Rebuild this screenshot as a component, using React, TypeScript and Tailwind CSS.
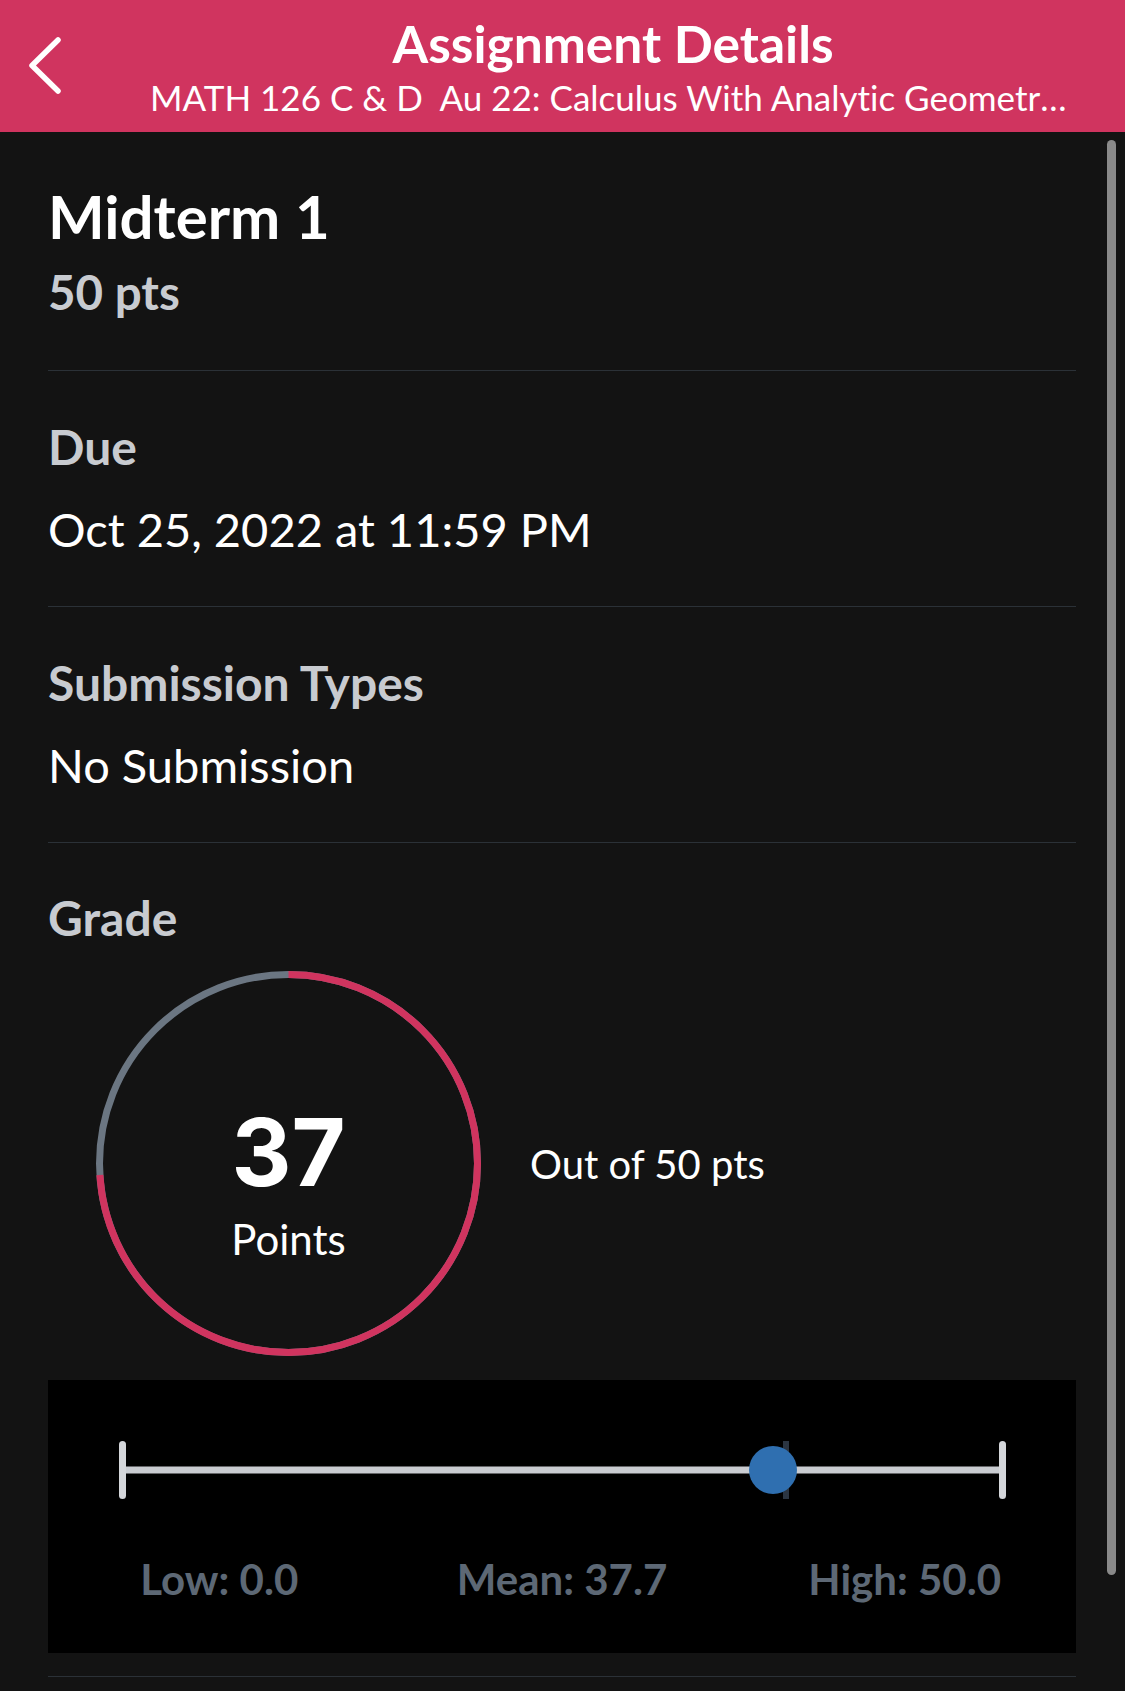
const Section = ({ label, value }: { label: string; value: string }) => (
  <div className="pt-[48px] pb-[49px] border-b border-[#2b3137]">
    <div className="text-[48px] leading-[56px] font-bold text-[#c8cbd0]">{label}</div>
    <div className="mt-[26px] text-[47px] leading-[56px] text-white">{value}</div>
  </div>
)

const ScoreRing = ({ score, total }: { score: number; total: number }) => {
  const r = 189
  const c = 2 * Math.PI * r
  const filled = (score / total) * c
  return (
    <div className="relative w-[385px] h-[385px] flex flex-col items-center pt-[135px] shrink-0">
      <svg className="absolute inset-0" width="385" height="385" viewBox="0 0 385 385">
        <circle cx="192.5" cy="192.5" r={r} fill="none" stroke="#6b7682" strokeWidth="7" />
        <circle
          cx="192.5"
          cy="192.5"
          r={r}
          fill="none"
          stroke="#d0345f"
          strokeWidth="7"
          strokeDasharray={`${filled} ${c}`}
          transform="rotate(-90 192.5 192.5)"
        />
      </svg>
      <div className="relative font-[Inter,sans-serif] font-bold text-[93px] leading-[92px] text-white">{score}</div>
      <div className="relative mt-[17px] text-[42px] leading-[48px] text-white">Points</div>
    </div>
  )
}

const GradeStats = () => (
  <div className="mt-[24px] h-[273px] bg-black flex flex-col">
    <svg className="mt-[61px] block" width="1029" height="58" viewBox="0 0 1029 58">
      <rect x="74" y="25.5" width="880" height="7" fill="#c9ccd1" />
      <line x1="74.5" y1="3.5" x2="74.5" y2="54.5" stroke="#d4d6da" strokeWidth="7" strokeLinecap="round" />
      <line x1="954.5" y1="3.5" x2="954.5" y2="54.5" stroke="#d4d6da" strokeWidth="7" strokeLinecap="round" />
      <rect x="735" y="0" width="6" height="58" fill="#2b3542" />
      <circle cx="725" cy="29" r="24" fill="#2f6fb0" />
    </svg>
    <div className="mt-[56px] grid grid-cols-3 text-center text-[42px] leading-[48px] font-bold text-[#5d6875]">
      <span>Low: 0.0</span>
      <span>Mean: 37.7</span>
      <span>High: 50.0</span>
    </div>
  </div>
)

export default function App() {
  return (
    <div className="relative w-full h-[1691px] overflow-hidden bg-[#131313] font-[Lato,sans-serif] [font-variant-ligatures:none]">
      <header className="h-[132px] bg-[#d0345f] flex">
        <div className="w-[101px] shrink-0">
          <svg width="101" height="132" viewBox="0 0 101 132">
            <polyline
              points="58,40 32,65.5 58,91"
              fill="none"
              stroke="white"
              strokeWidth="5.5"
              strokeLinecap="round"
              strokeLinejoin="round"
            />
          </svg>
        </div>
        <div className="flex-1 min-w-0 flex flex-col items-center pt-[15px] text-white">
          <div className="text-[51.5px] leading-[56px] font-bold">Assignment Details</div>
          <div className="mt-[6px] max-w-[926px] truncate text-[35px] leading-[40px]">
            MATH 126 C &amp; D{'\u00a0'} Au 22: Calculus With Analytic Geometry I
          </div>
        </div>
      </header>

      <main className="pl-[48px] pr-[49px]">
        <div className="pt-[48px] pb-[50px] border-b border-[#2b3137]">
          <div className="text-[60px] leading-[72px] font-bold text-white">Midterm 1</div>
          <div className="mt-[12px] text-[47.5px] leading-[56px] font-bold text-[#c8cbd0]">50 pts</div>
        </div>

        <Section label="Due" value="Oct 25, 2022 at 11:59 PM" />
        <Section label="Submission Types" value="No Submission" />

        <div className="pt-[47px] pb-[23px] border-b border-[#2b3137]">
          <div className="text-[48px] leading-[56px] font-bold text-[#c8cbd0]">Grade</div>
          <div className="mt-[25px] pl-[48px] flex items-center gap-[49px]">
            <ScoreRing score={37} total={50} />
            <div className="text-[40px] leading-[48px] text-white">Out of 50 pts</div>
          </div>
          <GradeStats />
        </div>
      </main>

      <div className="absolute right-[9px] top-[140px] w-[9px] h-[1435px] rounded-full bg-[#8a8a8a]" />
    </div>
  )
}
